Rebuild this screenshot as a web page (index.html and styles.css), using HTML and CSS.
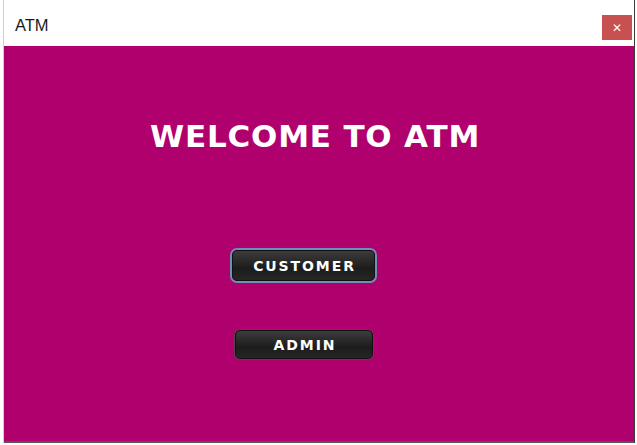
FILE: index.html
```html
<!DOCTYPE html>
<html>
<head>
<meta charset="utf-8">
<link rel="stylesheet" href="styles.css">
</head>
<body>
<div class="window">
  <div class="titlebar">
    <span class="title">ATM</span>
    <button class="close">&#x2715;</button>
  </div>
  <div class="content">
    <h1 class="welcome">WELCOME TO ATM</h1>
    <div class="buttons">
      <button class="btn focused">CUSTOMER</button>
      <button class="btn admin">ADMIN</button>
    </div>
  </div>
</div>
</body>
</html>
```
FILE: styles.css
```css
html, body {
  margin: 0;
  padding: 0;
  background: #ffffff;
}
.window {
  margin-left: 3px;
  width: 630px;
  border-left: 1px solid #d0d0d0;
  border-right: 1px solid #3a3a3a;
  display: flex;
  flex-direction: column;
}
.titlebar {
  height: 46px;
  display: flex;
  align-items: flex-start;
  justify-content: space-between;
  background: #ffffff;
}
.title {
  font-family: "Liberation Sans", Arial, sans-serif;
  font-size: 16.5px;
  line-height: 20px;
  color: #1a1a1a;
  margin-left: 11px;
  margin-top: 15px;
}
.close {
  width: 30px;
  height: 25px;
  margin-right: 2px;
  margin-top: 15px;
  border: none;
  background: #c75050;
  color: #ffffff;
  font-family: "DejaVu Sans", sans-serif;
  font-size: 12px;
  font-weight: bold;
  padding: 0;
}
.content {
  height: 395px;
  background: #b0006e;
  border-bottom: 2px solid #555;
  display: flex;
  flex-direction: column;
  align-items: center;
}
.welcome {
  margin: 72px 0 0 0;
  font-family: "DejaVu Sans", Verdana, sans-serif;
  font-weight: bold;
  font-size: 31px;
  letter-spacing: 0.8px;
  line-height: 36px;
  color: #ffffff;
  margin-right: 8px;
}
.buttons {
  margin-top: 96px;
  display: flex;
  flex-direction: column;
  align-items: center;
  gap: 49px;
  margin-right: 31px;
}
.btn {
  font-family: "DejaVu Sans", Verdana, sans-serif;
  font-weight: bold;
  font-size: 14px;
  letter-spacing: 1.9px;
  color: #ffffff;
  border-radius: 5px;
  background: linear-gradient(#3c3c3c, #1c1c1c 60%, #262626);
  border: 1px solid #111;
  padding: 0 0 0 2px;
}
.focused {
  width: 143px;
  height: 31px;
  box-shadow: 0 0 0 2px #6f8fb8;
}
.admin {
  width: 138px;
  height: 29px;
  box-shadow: 0 0 0 1px #5a4050;
  margin-left: 1px;
}
```
